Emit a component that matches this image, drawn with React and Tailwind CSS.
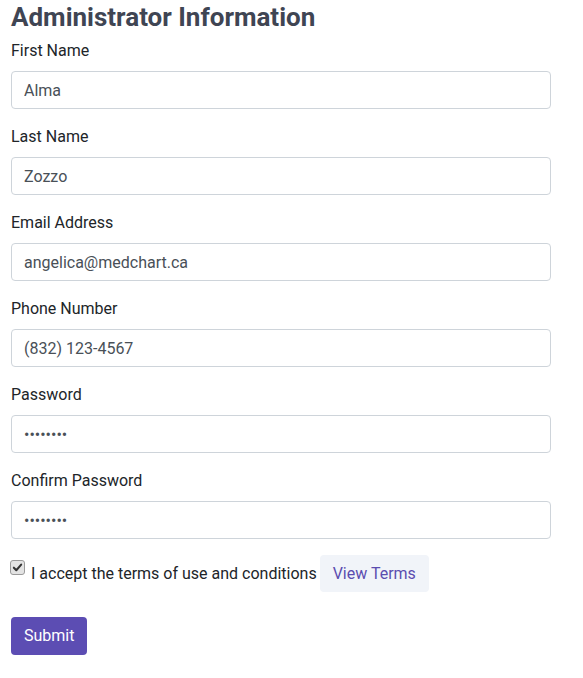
import { useState } from 'react';

const fields = [
  { label: 'First Name', value: 'Alma', type: 'text' },
  { label: 'Last Name', value: 'Zozzo', type: 'text' },
  { label: 'Email Address', value: 'angelica@medchart.ca', type: 'email' },
  { label: 'Phone Number', value: '(832) 123-4567', type: 'tel' },
  { label: 'Password', value: '••••••••', type: 'text' },
  { label: 'Confirm Password', value: '••••••••', type: 'text' },
];

export default function App() {
  const [accepted, setAccepted] = useState(true);

  return (
    <div className="w-[583px] min-h-[678px] bg-white px-[11px] font-['Roboto',sans-serif] text-[#212529]">
      <h2 className="text-[26px] leading-[34px] mb-[5px] font-bold text-[#3f4553]">Administrator Information</h2>
      <form className="w-[540px]" onSubmit={(e) => e.preventDefault()}>
        {fields.map((f) => (
          <div key={f.label} className="mb-4">
            <label className="block text-base leading-6 mb-2">{f.label}</label>
            <input
              type={f.type}
              defaultValue={f.value}
              className="block w-full h-[38px] px-3 rounded-[4px] border border-[#ced4da] text-base text-[#495057] focus:outline-none"
            />
          </div>
        ))}
        <div className="flex items-center mt-[16px]">
          <button
            type="button"
            onClick={() => setAccepted(!accepted)}
            className="-ml-[1px] w-[15px] h-[15px] -mt-[13px] rounded-[3px] border border-[#9a9a9a] bg-[#e3e3e3] flex items-center justify-center"
          >
            {accepted && (
              <svg viewBox="0 0 12 12" className="w-[11px] h-[11px]">
                <path d="M2 6.2 L4.7 9 L10 2.8" fill="none" stroke="#333" strokeWidth="2.2" strokeLinecap="round" strokeLinejoin="round" />
              </svg>
            )}
          </button>
          <span className="ml-[6px] text-base leading-6">I accept the terms of use and conditions</span>
          <button type="button" className="ml-[3px] h-[37px] px-[13px] rounded-[4px] bg-[#f1f4f9] text-base text-[#5b4db0]">
            View Terms
          </button>
        </div>
        <button type="submit" className="mt-[25px] h-[38px] px-[13px] rounded-[4px] bg-[#5c4db3] text-white text-base">
          Submit
        </button>
      </form>
    </div>
  );
}
